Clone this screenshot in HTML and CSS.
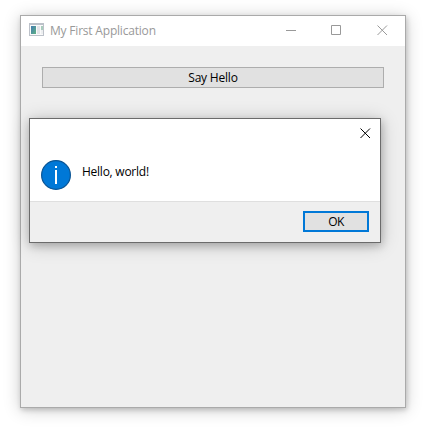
FILE: index.html
```
<!DOCTYPE html>
<html lang="en">
<head>
<meta charset="utf-8">
<title>My First Application</title>
<link rel="stylesheet" href="styles.css">
</head>
<body>
<main class="window">
  <header class="titlebar">
    <svg class="app-icon" width="16" height="14" viewBox="0 0 16 14">
      <defs><linearGradient id="pane" x1="0" y1="0" x2="1" y2="1"><stop offset="0" stop-color="#427bb0"/><stop offset="1" stop-color="#5fb184"/></linearGradient></defs>
      <path d="M0 0h15v13H0z" fill="#bcc1c9"/>
      <path d="M1 2h13v10H1z" fill="#fafafa"/>
      <path d="M2 3h5v8H2z" fill="url(#pane)"/>
      <path d="M8 3h3v8H8z" fill="#e3e4e8"/>
      <path d="M12 3h2v4h-2z" fill="#a9cdbd"/>
      <path d="M12 7h2v4h-2z" fill="#eceef0"/>
    </svg>
    <h1 class="title">My First Application</h1>
    <div class="controls">
      <svg width="11" height="11" viewBox="0 0 11 11"><path d="M0 5.500h10" /></svg>
      <svg width="11" height="11" viewBox="0 0 11 11"><path d="M.5 .5h9v9h-9z" /></svg>
      <svg class="window-close" width="11" height="11" viewBox="0 0 11 11"><path d="M.5 .5l9.500 9.500M10 .5L.5 10" /></svg>
    </div>
  </header>
  <div class="content">
    <button class="button hello">Say Hello</button>
  </div>
</main>
<section class="dialog">
  <div class="dialog-top">
    <svg class="close" width="11" height="11" viewBox="0 0 11 11"><path d="M.5 .5l9.500 9.500M10 .5L.5 10" /></svg>
  </div>
  <div class="message">
    <svg width="30" height="30" viewBox="0 0 30 30">
      <circle cx="15" cy="15" r="14.400" fill="#0078d7" stroke="#0b5594" stroke-width="1.200"/>
      <path d="M14 6h2v2h-2zM14 10h2v14h-2z" fill="#fff"/>
    </svg>
    <p class="greeting">Hello, world!</p>
  </div>
  <footer class="dialog-footer">
    <button class="button ok">OK</button>
  </footer>
</section>
</body>
</html>
```

FILE: styles.css
```
* { box-sizing: border-box; }
body {
  margin: 0;
  width: 423px;
  height: 428px;
  padding: 15px 0 0 20px;
  overflow: hidden;
  background: #fff;
  font: 12px/16px "Open Sans", "Noto Sans", sans-serif;
  color: #000;
}
.window {
  width: 386px;
  height: 393px;
  border: 1px solid #aaa;
  background: #efefef;
  box-shadow: 0 2px 16px rgba(0, 0, 0, .2), 1px 2px 5px rgba(0, 0, 0, .18);
}
.titlebar {
  display: flex;
  height: 30px;
  padding-left: 8px;
  background: #fff;
}
.app-icon { margin-top: 7px; }
.title {
  margin: 7px 0 0 5px;
  font-size: 12px;
  font-weight: 400;
  letter-spacing: -.2px;
  white-space: nowrap;
  color: #999;
}
.controls {
  display: flex;
  gap: 34px;
  margin: 9px 17px 0 auto;
}
svg { display: block; flex: none; }
.controls path { fill: none; stroke: #999; }
.window-close { margin-left: 1px; }
.content { padding: 21px; }
.button {
  display: block;
  height: 21px;
  padding: 0;
  border: 1px solid #adadad;
  border-radius: 0;
  background: #e1e1e1;
  font: inherit;
  line-height: 19px;
  color: #000;
}
.hello { width: 342px; letter-spacing: -.2px; }
.dialog {
  position: absolute;
  left: 29px;
  top: 118px;
  width: 352px;
  height: 125px;
  border: 1px solid #6b6b6b;
  background: #fff;
  box-shadow: 0 2px 18px rgba(0, 0, 0, .2), 1px 3px 8px rgba(0, 0, 0, .2);
}
.dialog-top {
  display: flex;
  justify-content: flex-end;
  height: 41px;
  padding: 9px 9px 0 0;
}
.close path { fill: none; stroke: #000; }
.message {
  display: flex;
  gap: 11px;
  height: 41px;
  padding-left: 11px;
}
.greeting { margin: 4px 0 0; letter-spacing: -.25px; }
.dialog-footer {
  display: flex;
  justify-content: flex-end;
  height: 41px;
  padding: 9px 11px 0 0;
  border-top: 1px solid #dfdfdf;
  background: #efefef;
}
.ok {
  width: 66px;
  border: 2px solid #0078d7;
  line-height: 17px;
  letter-spacing: -.5px;
}
```
